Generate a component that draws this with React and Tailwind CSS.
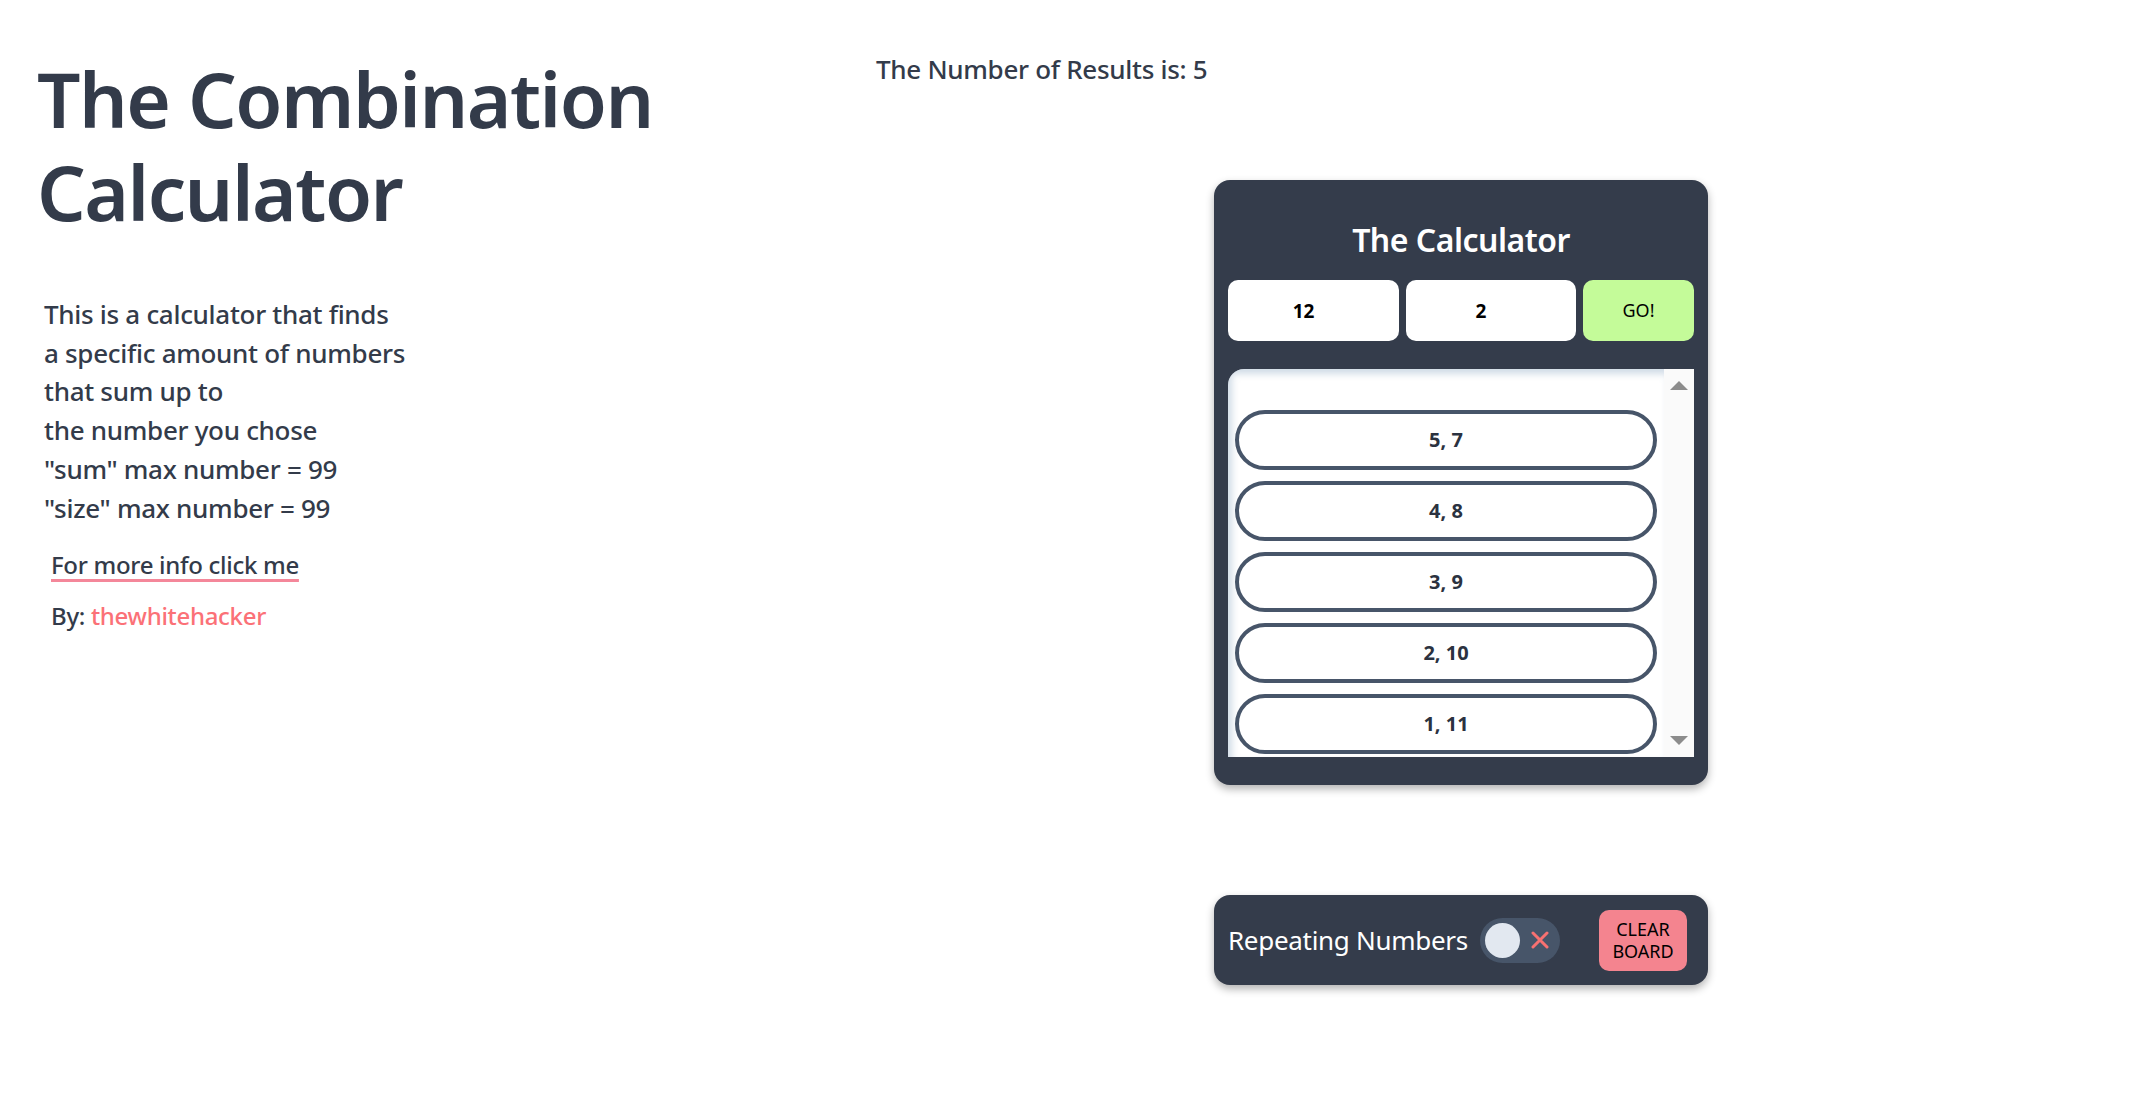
import { useState } from 'react';

const RESULTS = ['5, 7', '4, 8', '3, 9', '2, 10', '1, 11'];

export default function App() {
  const [sum, setSum] = useState('12');
  const [size, setSize] = useState('2');
  const [repeat, setRepeat] = useState(false);

  return (
    <div className="flex min-h-screen bg-white font-['Noto_Sans',sans-serif] text-[#333b4a]">
      <section className="w-[839px] shrink-0 pl-[37px] pt-[52px]">
        <h1 className="text-[76.5px] font-semibold leading-[93px] tracking-[-1.5px]">
          The Combination
          <br />
          Calculator
        </h1>
        <p className="mt-[57px] pl-[7px] text-[26px] font-medium leading-[38.7px] tracking-[-0.3px]">
          This is a calculator that finds
          <br />
          a specific amount of numbers
          <br />
          that sum up to
          <br />
          the number you chose
          <br />
          "sum" max number = 99
          <br />
          "size" max number = 99
        </p>
        <a
          href="#"
          className="mt-[21px] ml-[14px] inline-block text-[24px] font-medium leading-[34px] tracking-[-0.3px] underline decoration-[#f4879a] decoration-[3px] underline-offset-[5px]"
        >
          For more info click me
        </a>
        <p className="mt-[17px] pl-[14px] text-[24px] font-medium leading-[34px] tracking-[-0.3px]">
          By: <span className="text-[#fb7177]">thewhitehacker</span>
        </p>
      </section>

      <section className="flex flex-col pt-[52px]">
        <h2 className="pl-[37px] text-[26px] font-medium leading-[34px] tracking-[-0.3px]">The Number of Results is: 5</h2>

        <div className="ml-[375px] mt-[94px] flex w-[494px] flex-col gap-[110px]">
          <div className="rounded-[16px] bg-[#343c4b] px-[14px] pt-[37px] pb-[28px] shadow-[0_4px_8px_rgba(0,0,0,0.3)]">
            <h3 className="text-center text-[32px] font-semibold leading-[46px] tracking-[-0.5px] text-white">The Calculator</h3>
            <div className="mt-[17px] flex gap-[7px]">
              <input
                value={sum}
                onChange={(e) => setSum(e.target.value)}
                className="h-[61px] w-[171px] rounded-[10px] bg-white pr-[20px] text-center text-[19px] font-bold text-black outline-none"
              />
              <input
                value={size}
                onChange={(e) => setSize(e.target.value)}
                className="h-[61px] w-[170px] rounded-[10px] bg-white pr-[20px] text-center text-[19px] font-bold text-black outline-none"
              />
              <button className="h-[61px] flex-1 rounded-[10px] bg-[#c4fb99] text-[18px] text-black">GO!</button>
            </div>

            <div className="mt-[28px] flex h-[388px] overflow-hidden rounded-tl-[16px] bg-white">
              <ul className="flex flex-1 flex-col gap-[11px] px-[7px] pt-[41px] shadow-[inset_4px_5px_7px_rgba(150,175,200,0.45)]">
                {RESULTS.map((r) => (
                  <li
                    key={r}
                    className="flex h-[60px] shrink-0 items-center justify-center rounded-full border-[4px] border-[#475569] text-[20px] font-bold text-[#2b3240]"
                  >
                    {r}
                  </li>
                ))}
              </ul>
              <div className="flex w-[30px] flex-col items-center justify-between bg-[#fafafa] py-[12px]">
                <svg width="18" height="9" viewBox="0 0 18 9">
                  <path d="M9 0 L18 9 L0 9 Z" fill="#8c8c8c" />
                </svg>
                <svg width="18" height="9" viewBox="0 0 18 9">
                  <path d="M0 0 L18 0 L9 9 Z" fill="#8c8c8c" />
                </svg>
              </div>
            </div>
          </div>

          <div className="flex h-[90px] items-center rounded-[16px] bg-[#343c4b] pl-[14px] pr-[21px] shadow-[0_4px_8px_rgba(0,0,0,0.3)]">
            <span className="text-[26px] leading-none tracking-[-0.3px] text-white">Repeating Numbers</span>
            <button
              onClick={() => setRepeat((v) => !v)}
              className="ml-[12px] flex h-[45px] w-[80px] items-center rounded-full bg-[#475569] px-[5px]"
            >
              <span className="h-[35px] w-[35px] rounded-full bg-[#e2e8f0]" />
              <svg className="ml-[11px]" width="18" height="18" viewBox="0 0 18 18">
                <path d="M2 2 L16 16 M16 2 L2 16" stroke="#f87171" strokeWidth="3" strokeLinecap="round" />
              </svg>
            </button>
            <button className="ml-auto h-[61px] w-[88px] rounded-[10px] bg-[#f4848f] text-[18px] leading-[22px] text-black">
              CLEAR
              <br />
              BOARD
            </button>
          </div>
        </div>
      </section>
    </div>
  );
}
